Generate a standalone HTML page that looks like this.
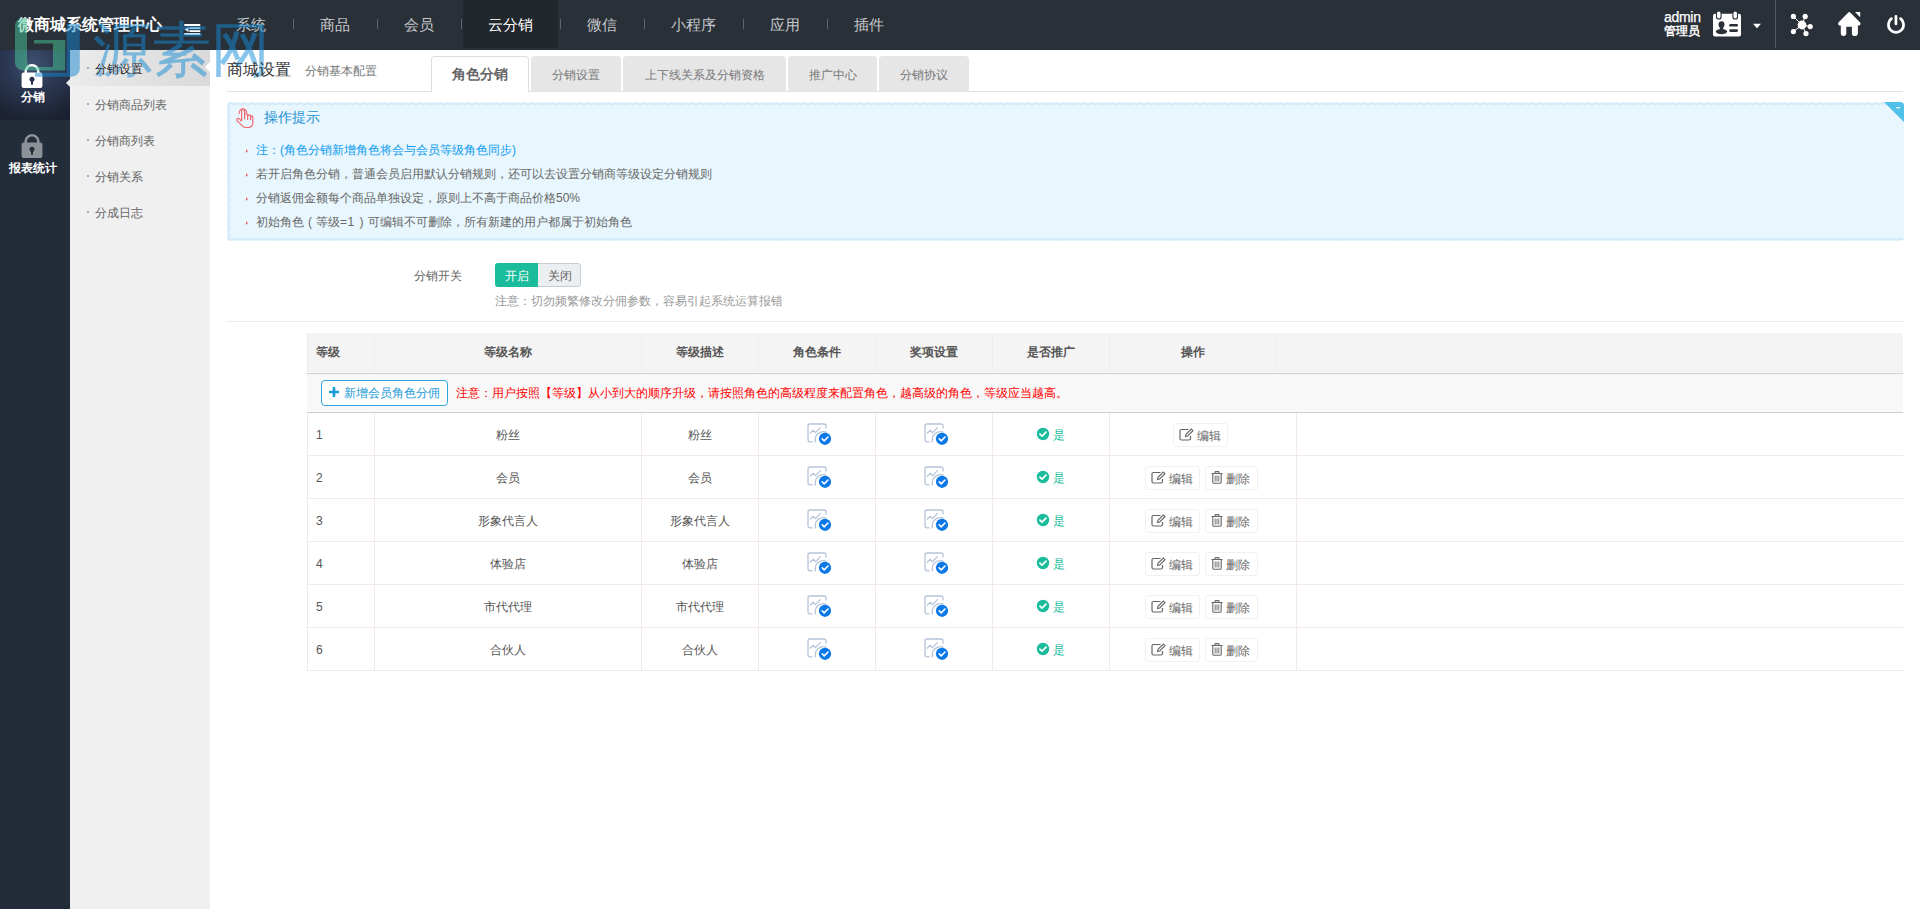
<!DOCTYPE html><html><head><meta charset="utf-8"><style>
*{margin:0;padding:0;box-sizing:border-box}
html,body{width:1920px;height:909px;overflow:hidden;background:#fff;font-family:"Liberation Sans",sans-serif;font-size:12px;color:#666}
.a{position:absolute;white-space:nowrap}
#top{position:absolute;left:0;top:0;width:1920px;height:50px;background:#2a3038}
#logo{position:absolute;left:18px;top:15px;font-size:16px;font-weight:bold;color:#fff;line-height:20px;white-space:nowrap}
.nav{position:absolute;top:0;height:50px;line-height:50px;font-size:15px;color:#c6c9cd;text-align:center;white-space:nowrap}
.nav.on{background:#22262d;color:#fff;height:48px}
.sep{position:absolute;top:19px;width:1px;height:10px;background:#5e646c}
#side{position:absolute;left:0;top:50px;width:70px;height:859px;background:#232d39}
#side .on{position:absolute;left:0;top:0;width:70px;height:70px;background:radial-gradient(ellipse 62px 58px at 33px 14px,#3d5170 0%,#2b3752 45%,#1b2130 100%)}
.sl{position:absolute;left:0;width:66px;text-align:center;font-weight:bold;color:#fff;font-size:12px;line-height:14px}
#sub{position:absolute;left:70px;top:50px;width:140px;height:859px;background:#f0f0f0}
.si{position:absolute;left:0;width:140px;height:36px;line-height:38px;padding-left:25px;color:#666;white-space:nowrap}
.si:before{content:"";position:absolute;left:17px;top:17px;width:2px;height:2px;background:#aaa}
.si.on{background:linear-gradient(90deg,#ebebeb,#d9d9d9);color:#111}
.si.on span{position:relative;z-index:20;text-shadow:0 0 1px #fff,0 0 1px #fff}
.tab{position:absolute;top:56px;height:35px;line-height:38px;text-align:center;background:#e6e6e6;border-radius:4px 4px 0 0;color:#777;font-size:12px}
.tab.on{background:#fff;border:1px solid #ddd;border-bottom:none;height:36px;font-size:14px;font-weight:bold;color:#666;line-height:34px}
.tip{position:absolute;left:227px;top:102px;width:1677px;height:139px;background:#e9f6fc;border:1px dashed #cbe7f5;border-radius:4px}
.tl{position:absolute;left:256px;line-height:16px;color:#777}
.tb{position:absolute;left:246px;width:0;height:0;border-left:2.5px solid #f2646d;border-top:2px solid transparent;border-bottom:2px solid transparent}
.th{position:absolute;top:333px;height:40px;line-height:40px;text-align:center;font-weight:bold;color:#555;background:#f4f4f4;border-right:1px solid #f2e9ea}
.td{position:absolute;height:43px;line-height:43px;text-align:center;color:#555;border-right:1px solid #f2e9ea;border-bottom:1px solid #f2e9ea}
.btn{position:absolute;height:24px;line-height:25px;border:1px solid #f1f1f1;border-radius:3px;color:#666;background:#fff}
</style></head><body>
<div id="top"><div id="logo">微商城系统管理中心</div><div class="nav" style="left:209px;width:84px">系统</div>
<div class="nav" style="left:293px;width:84px">商品</div>
<div class="sep" style="left:293px"></div>
<div class="nav" style="left:377px;width:84px">会员</div>
<div class="sep" style="left:377px"></div>
<div class="nav on" style="left:463px;width:95px">云分销</div>
<div class="sep" style="left:461px"></div>
<div class="nav" style="left:560px;width:84px">微信</div>
<div class="sep" style="left:560px"></div>
<div class="nav" style="left:644px;width:99px">小程序</div>
<div class="sep" style="left:644px"></div>
<div class="nav" style="left:743px;width:84px">应用</div>
<div class="sep" style="left:743px"></div>
<div class="nav" style="left:827px;width:84px">插件</div>
<div class="sep" style="left:827px"></div></div>
<svg class="a" style="left:184px;top:23px" width="17" height="13" viewBox="0 0 17 13">
<rect x="0.3" y="1" width="16" height="2" fill="#fff"/><rect x="5.4" y="4.2" width="10.9" height="1.8" fill="#fff"/>
<rect x="5.4" y="7.2" width="10.9" height="1.8" fill="#fff"/><rect x="0.3" y="10" width="16" height="2" fill="#fff"/>
<path d="M0.5 6.5 L4.5 4 L4.5 9 Z" fill="#fff"/></svg>
<div class="a" style="left:1664px;top:8.5px;color:#fff;font-size:14px;line-height:16px;letter-spacing:-0.3px;-webkit-text-stroke:0.25px #fff">admin</div>
<div class="a" style="left:1664px;top:23px;color:#fff;font-size:12px;font-weight:bold;line-height:16px">管理员</div>
<svg class="a" style="left:1712px;top:11px" width="30" height="27" viewBox="0 0 30 27">
<rect x="1" y="2.8" width="28" height="22.6" rx="2" fill="#fff"/>
<rect x="4.5" y="0" width="4.6" height="8" rx="2.3" fill="#fff" stroke="#2a3038" stroke-width="1.1"/>
<rect x="20.9" y="0" width="4.6" height="8" rx="2.3" fill="#fff" stroke="#2a3038" stroke-width="1.1"/>
<ellipse cx="9.5" cy="13.6" rx="3" ry="3.4" fill="#2a3038"/>
<rect x="7.8" y="15" width="3.4" height="4.5" fill="#2a3038"/>
<ellipse cx="9.5" cy="20.6" rx="5.6" ry="2.7" fill="#2a3038"/>
<rect x="17.2" y="13.1" width="8.8" height="2.5" rx="1.25" fill="#2a3038"/><rect x="17.2" y="18.3" width="8.8" height="2.6" rx="1.3" fill="#2a3038"/>
</svg>
<svg class="a" style="left:1752px;top:23px" width="10" height="6" viewBox="0 0 10 6"><path d="M1 0.8 H9 L5 5.2 Z" fill="#fff"/></svg>
<div class="a" style="left:1775px;top:0;width:1px;height:48px;background:#545961"></div>
<svg class="a" style="left:1788px;top:12px" width="28" height="26" viewBox="1788 12 28 26">
<g stroke="#fff" stroke-width="1" fill="none"><path d="M1793.4 16.4 L1802 25 L1805.2 16.4 M1802 25 L1810.2 26.6 M1802 25 L1793.4 31.6 M1802 25 L1806 33.6"/></g>
<g fill="#fff"><circle cx="1802" cy="25" r="4.4"/><circle cx="1793.4" cy="16.4" r="2.6"/><circle cx="1805.2" cy="16.4" r="2.6"/>
<circle cx="1810.2" cy="26.6" r="2.6"/><circle cx="1793.4" cy="31.6" r="2.6"/><circle cx="1806" cy="33.6" r="2.6"/></g></svg>
<svg class="a" style="left:1836px;top:10px" width="28" height="28" viewBox="1836 10 28 28">
<path d="M1848.1 12.7 Q1849.3 11.5 1850.5 12.7 L1859.9 22.2 Q1861.6 24.1 1859.3 25.6 L1857.9 25.6 L1857.9 33.8 Q1857.7 36.1 1854.9 36.1 Q1852.1 36.1 1851.9 33.8 L1851.9 26.8 L1846.3 26.8 L1846.3 33.8 Q1846.1 36.1 1843.5 36.1 Q1841 36.1 1840.8 33.8 L1840.8 25.6 L1839.4 25.6 Q1837 24.1 1838.7 22.2 Z" fill="#fff"/>
<path d="M1855 12 L1860.2 12 L1860.2 17.2 Z" fill="#fff"/></svg>
<svg class="a" style="left:1885px;top:13px" width="22" height="23" viewBox="1885 13 22 23">
<path d="M1891.4 18.7 A7.6 7.6 0 1 0 1900.6 18.7" fill="none" stroke="#fff" stroke-width="2.8" stroke-linecap="round"/>
<rect x="1894.6" y="15" width="2.7" height="10.2" rx="1.3" fill="#fff"/></svg>
<div id="side"><div class="on"></div></div>
<svg class="a" style="left:21px;top:63px" width="22" height="26" viewBox="0 0 22 26">
<path d="M4.7 10.5 V8.65 A6.3 6.3 0 0 1 17.3 8.65 V10.5" fill="none" stroke="#fff" stroke-width="2.5"/>
<rect x="0.6" y="9.6" width="20.8" height="15.4" rx="2" fill="#fff"/>
<circle cx="11" cy="16.3" r="2.5" fill="#25304a"/><path d="M9.9 17 L12.1 17 L11.9 21.6 Q11 22.2 10.1 21.6 Z" fill="#25304a"/></svg>
<div class="sl" style="top:90px">分销</div>
<svg class="a" style="left:21px;top:133px" width="22" height="26" viewBox="0 0 22 26">
<path d="M4.7 10.5 V8.65 A6.3 6.3 0 0 1 17.3 8.65 V10.5" fill="none" stroke="#8d9299" stroke-width="2.5"/>
<rect x="0.6" y="9.6" width="20.8" height="15.4" rx="2" fill="#8d9299"/>
<circle cx="11" cy="16.3" r="2.5" fill="#232d39"/><path d="M9.9 17 L12.1 17 L11.9 21.6 Q11 22.2 10.1 21.6 Z" fill="#232d39"/></svg>
<div class="sl" style="top:161px">报表统计</div>
<div class="a" style="left:66px;top:79px;width:0;height:0;border-right:4px solid #e9e9e9;border-top:4.5px solid transparent;border-bottom:4.5px solid transparent"></div>
<div id="sub"><div class="si on" style="top:0"><span>分销设置</span></div><div class="si" style="top:36px">分销商品列表</div><div class="si" style="top:72px">分销商列表</div><div class="si" style="top:108px">分销关系</div><div class="si" style="top:144px">分成日志</div></div>
<div class="a" style="left:205px;top:62px;width:0;height:0;border-right:5px solid #fff;border-top:5px solid transparent;border-bottom:5px solid transparent"></div>
<div class="a" style="left:227px;top:60px;font-size:16px;line-height:20px;color:#333;z-index:20">商城设置</div>
<div class="a" style="left:305px;top:63px;font-size:12px;line-height:16px;color:#777">分销基本配置</div>
<div class="a" style="left:227px;top:91px;width:1676px;height:1px;background:#e2e2e2"></div>
<div class="tab on" style="left:431px;width:98px">角色分销</div>
<div class="tab" style="left:531px;width:90px">分销设置</div>
<div class="tab" style="left:623px;width:163px">上下线关系及分销资格</div>
<div class="tab" style="left:788px;width:89px">推广中心</div>
<div class="tab" style="left:879px;width:90px">分销协议</div>
<svg class="a" style="left:227px;top:102px" width="1677" height="139" viewBox="0 0 1677 139">
<defs>
<pattern id="pt" x="0" y="0" width="7" height="4" patternUnits="userSpaceOnUse"><path d="M-0.5 3.2 Q3.5 -0.4 7.5 3.2" fill="none" stroke="#d2eaf7" stroke-width="1.6"/></pattern>
<pattern id="pb" x="0" y="135" width="7" height="4" patternUnits="userSpaceOnUse"><path d="M-0.5 0.8 Q3.5 4.4 7.5 0.8" fill="none" stroke="#d2eaf7" stroke-width="1.6"/></pattern>
<pattern id="pl" x="0" y="0" width="4" height="7" patternUnits="userSpaceOnUse"><path d="M3.2 -0.5 Q-0.4 3.5 3.2 7.5" fill="none" stroke="#d2eaf7" stroke-width="1.6"/></pattern>
<pattern id="pr" x="1673" y="0" width="4" height="7" patternUnits="userSpaceOnUse"><path d="M0.8 -0.5 Q4.4 3.5 0.8 7.5" fill="none" stroke="#d2eaf7" stroke-width="1.6"/></pattern>
<clipPath id="cr"><rect x="0" y="0" width="1677" height="139" rx="4"/></clipPath>
</defs>
<g clip-path="url(#cr)">
<rect x="0" y="0" width="1677" height="139" fill="#e8f6fd"/>
<rect x="0" y="0" width="1677" height="4" fill="url(#pt)"/>
<rect x="0" y="135" width="1677" height="4" fill="url(#pb)"/>
<rect x="0" y="0" width="4" height="139" fill="url(#pl)"/>
</g></svg>
<svg class="a" style="left:1884px;top:102px" width="20" height="20" viewBox="0 0 20 20"><path d="M0 0 H16 A4 4 0 0 1 20 4 V20 Z" fill="#4fc0e8"/><rect x="12" y="5" width="4" height="1.3" fill="#fff"/></svg>
<svg class="a" style="left:230px;top:104px" width="30" height="28" viewBox="230 104 30 28">
<g fill="none" stroke="#f4666e" stroke-width="1.15" stroke-linecap="round" stroke-linejoin="round">
<path d="M241.6 120.5 V111.2 A1.5 1.5 0 0 1 244.6 111.2 V118.8"/>
<path d="M244.6 115 A1.5 1.3 0 0 1 247.6 115 V119.5"/>
<path d="M247.6 116.2 A1.5 1.3 0 0 1 250.6 116.2 V119.5"/>
<path d="M250.6 117 A1.1 1.1 0 0 1 252.8 117 V123.3 A4.2 4.2 0 0 1 248.6 127.5 H245.6 A3.5 3.5 0 0 1 243 126.4 L237.2 120.8 A1.3 1.3 0 0 1 239 118.8 L241.6 121"/>
<path d="M239.2 113.6 A3.8 4.3 0 1 1 246.8 112.8"/>
</g></svg>
<div class="a" style="left:264px;top:108px;font-size:14px;line-height:18px;color:#1890d2">操作提示</div>
<div class="tb" style="top:148.5px"></div>
<div class="tl" style="top:142px;color:#0e9cf0">注：(角色分销新增角色将会与会员等级角色同步)</div>
<div class="tb" style="top:172.5px"></div>
<div class="tl" style="top:166px;color:#666">若开启角色分销，普通会员启用默认分销规则，还可以去设置分销商等级设定分销规则</div>
<div class="tb" style="top:196.5px"></div>
<div class="tl" style="top:190px;color:#666">分销返佣金额每个商品单独设定，原则上不高于商品价格50%</div>
<div class="tb" style="top:220.5px"></div>
<div class="tl" style="top:214px;color:#666">初始角色<span style="display:inline-block;width:12px;text-align:center">(</span>等级<span style="letter-spacing:0.6px">=1</span><span style="display:inline-block;width:13px;text-align:center">)</span>可编辑不可删除，所有新建的用户都属于初始角色</div>
<div class="a" style="left:414px;top:268px;line-height:16px;color:#666">分销开关</div>
<div class="a" style="left:495px;top:263px;width:86px;height:24px;border:1px solid #c8cdd2;border-radius:3px;background:#eceff1"></div>
<div class="a" style="left:495px;top:263px;width:43px;height:24px;border-radius:3px 0 0 3px;background:#1abc9c;color:#fff;text-align:center;line-height:26px">开启</div>
<div class="a" style="left:538px;top:263px;width:43px;height:24px;text-align:center;line-height:26px;color:#666">关闭</div>
<div class="a" style="left:495px;top:293px;line-height:16px;color:#999">注意：切勿频繁修改分佣参数，容易引起系统运算报错</div>
<div class="a" style="left:227px;top:321px;width:1676px;height:1px;background:#eaeaea"></div>
<div class="a" style="left:307px;top:333px;width:1596px;height:38px;background:#f4f4f4"></div>
<div class="a" style="left:307px;top:333px;width:1px;height:38px;background:#f2eaea"></div>
<div class="a" style="left:374px;top:333px;width:1px;height:38px;background:#f2eaea"></div>
<div class="a" style="left:641px;top:333px;width:1px;height:38px;background:#f2eaea"></div>
<div class="a" style="left:758px;top:333px;width:1px;height:38px;background:#f2eaea"></div>
<div class="a" style="left:875px;top:333px;width:1px;height:38px;background:#f2eaea"></div>
<div class="a" style="left:992px;top:333px;width:1px;height:38px;background:#f2eaea"></div>
<div class="a" style="left:1109px;top:333px;width:1px;height:38px;background:#f2eaea"></div>
<div class="a" style="left:1276px;top:333px;width:1px;height:38px;background:#f2eaea"></div>
<div class="a" style="left:307px;top:371px;width:1596px;height:1px;background:#f2eaea"></div>
<div class="a" style="left:316px;top:344px;line-height:16px;font-weight:bold;color:#555">等级</div>
<div class="a" style="left:374px;width:267px;text-align:center;top:344px;line-height:16px;font-weight:bold;color:#555">等级名称</div>
<div class="a" style="left:641px;width:117px;text-align:center;top:344px;line-height:16px;font-weight:bold;color:#555">等级描述</div>
<div class="a" style="left:758px;width:117px;text-align:center;top:344px;line-height:16px;font-weight:bold;color:#555">角色条件</div>
<div class="a" style="left:875px;width:117px;text-align:center;top:344px;line-height:16px;font-weight:bold;color:#555">奖项设置</div>
<div class="a" style="left:992px;width:117px;text-align:center;top:344px;line-height:16px;font-weight:bold;color:#555">是否推广</div>
<div class="a" style="left:1109px;width:167px;text-align:center;top:344px;line-height:16px;font-weight:bold;color:#555">操作</div>
<div class="a" style="left:307px;top:373px;width:1596px;height:1px;background:#cdcdcd"></div>
<div class="a" style="left:307px;top:374px;width:1596px;height:38px;background:#f8f8f8"></div>
<div class="a" style="left:307px;top:412px;width:1596px;height:1px;background:#cdcdcd"></div>
<div class="a" style="left:321px;top:380px;width:127px;height:26px;border:1px solid #2ea3dd;border-radius:4px;background:#fff;color:#1a9ad6;line-height:24px;padding-left:22px">新增会员角色分佣</div>
<svg class="a" style="left:328px;top:386px" width="12" height="12" viewBox="0 0 12 12"><path d="M6 1 V11 M1 6 H11" stroke="#1a9ad6" stroke-width="2.6"/></svg>
<div class="a" style="left:456px;top:385px;line-height:16px;color:#f00;">注意：用户按照【等级】从小到大的顺序升级，请按照角色的高级程度来配置角色，越高级的角色，等级应当越高。</div>
<div class="a" style="left:307px;top:413px;width:1px;height:258px;background:#f2eaea"></div>
<div class="a" style="left:374px;top:413px;width:1px;height:258px;background:#f2eaea"></div>
<div class="a" style="left:641px;top:413px;width:1px;height:258px;background:#f2eaea"></div>
<div class="a" style="left:758px;top:413px;width:1px;height:258px;background:#f2eaea"></div>
<div class="a" style="left:875px;top:413px;width:1px;height:258px;background:#f2eaea"></div>
<div class="a" style="left:992px;top:413px;width:1px;height:258px;background:#f2eaea"></div>
<div class="a" style="left:1109px;top:413px;width:1px;height:258px;background:#f2eaea"></div>
<div class="a" style="left:1296px;top:413px;width:1px;height:258px;background:#f2eaea"></div>
<div class="a" style="left:307px;top:455px;width:1596px;height:1px;background:#f2eaea"></div>
<div class="a" style="left:316px;top:427px;line-height:16px;color:#555">1</div>
<div class="a" style="left:375px;width:266px;text-align:center;top:427px;line-height:16px;color:#555">粉丝</div>
<div class="a" style="left:642px;width:116px;text-align:center;top:427px;line-height:16px;color:#555">粉丝</div>
<svg class="a" style="left:806px;top:423px" width="26" height="24" viewBox="0 0 26 24">
<g fill="none" stroke="#b5c4d9" stroke-width="1.3" stroke-linecap="round">
<path d="M6.2 18.8 H4 A2 2 0 0 1 2 16.8 V3 A2 2 0 0 1 4 1 H18 A2 2 0 0 1 20 3 V5"/>
<path d="M4.3 10.1 L7.3 7.3 L9.5 9.6 L14.4 4.6"/><path d="M9.3 18.8 V16 A8.5 7.5 0 0 1 17 8.6 A3 2 0 0 1 20 9.3"/></g>
<circle cx="19" cy="15.8" r="6.1" fill="#0b78e8"/>
<path d="M16.1 15.8 L18.2 17.9 L22 14" fill="none" stroke="#fff" stroke-width="1.6" stroke-linecap="round" stroke-linejoin="round"/></svg>
<svg class="a" style="left:923px;top:423px" width="26" height="24" viewBox="0 0 26 24">
<g fill="none" stroke="#b5c4d9" stroke-width="1.3" stroke-linecap="round">
<path d="M6.2 18.8 H4 A2 2 0 0 1 2 16.8 V3 A2 2 0 0 1 4 1 H18 A2 2 0 0 1 20 3 V5"/>
<path d="M4.3 10.1 L7.3 7.3 L9.5 9.6 L14.4 4.6"/><path d="M9.3 18.8 V16 A8.5 7.5 0 0 1 17 8.6 A3 2 0 0 1 20 9.3"/></g>
<circle cx="19" cy="15.8" r="6.1" fill="#0b78e8"/>
<path d="M16.1 15.8 L18.2 17.9 L22 14" fill="none" stroke="#fff" stroke-width="1.6" stroke-linecap="round" stroke-linejoin="round"/></svg>
<svg class="a" style="left:1036px;top:427px" width="14" height="14" viewBox="0 0 14 14">
<circle cx="7" cy="7" r="6.2" fill="#1abc9c"/><path d="M3.9 7.1 L6 9.1 L10 5.1" fill="none" stroke="#fff" stroke-width="1.7" stroke-linecap="round" stroke-linejoin="round"/></svg><div class="a" style="left:1053px;top:427px;line-height:16px;color:#1abc9c;font-size:12px">是</div>
<div class="btn" style="left:1173px;top:423px;width:55px;padding-left:23px">编辑</div>
<svg class="a" style="left:1179px;top:428px" width="15" height="13" viewBox="0 0 15 13">
<path d="M9.5 1.5 H2.5 A1.5 1.5 0 0 0 1 3 V10.5 A1.5 1.5 0 0 0 2.5 12 H10 A1.5 1.5 0 0 0 11.5 10.5 V8" fill="none" stroke="#666" stroke-width="1.2"/>
<path d="M6.5 8.5 L7 6.3 L12.3 1 L14 2.7 L8.7 8 Z" fill="none" stroke="#666" stroke-width="1.1"/></svg>
<div class="a" style="left:307px;top:498px;width:1596px;height:1px;background:#f2eaea"></div>
<div class="a" style="left:316px;top:470px;line-height:16px;color:#555">2</div>
<div class="a" style="left:375px;width:266px;text-align:center;top:470px;line-height:16px;color:#555">会员</div>
<div class="a" style="left:642px;width:116px;text-align:center;top:470px;line-height:16px;color:#555">会员</div>
<svg class="a" style="left:806px;top:466px" width="26" height="24" viewBox="0 0 26 24">
<g fill="none" stroke="#b5c4d9" stroke-width="1.3" stroke-linecap="round">
<path d="M6.2 18.8 H4 A2 2 0 0 1 2 16.8 V3 A2 2 0 0 1 4 1 H18 A2 2 0 0 1 20 3 V5"/>
<path d="M4.3 10.1 L7.3 7.3 L9.5 9.6 L14.4 4.6"/><path d="M9.3 18.8 V16 A8.5 7.5 0 0 1 17 8.6 A3 2 0 0 1 20 9.3"/></g>
<circle cx="19" cy="15.8" r="6.1" fill="#0b78e8"/>
<path d="M16.1 15.8 L18.2 17.9 L22 14" fill="none" stroke="#fff" stroke-width="1.6" stroke-linecap="round" stroke-linejoin="round"/></svg>
<svg class="a" style="left:923px;top:466px" width="26" height="24" viewBox="0 0 26 24">
<g fill="none" stroke="#b5c4d9" stroke-width="1.3" stroke-linecap="round">
<path d="M6.2 18.8 H4 A2 2 0 0 1 2 16.8 V3 A2 2 0 0 1 4 1 H18 A2 2 0 0 1 20 3 V5"/>
<path d="M4.3 10.1 L7.3 7.3 L9.5 9.6 L14.4 4.6"/><path d="M9.3 18.8 V16 A8.5 7.5 0 0 1 17 8.6 A3 2 0 0 1 20 9.3"/></g>
<circle cx="19" cy="15.8" r="6.1" fill="#0b78e8"/>
<path d="M16.1 15.8 L18.2 17.9 L22 14" fill="none" stroke="#fff" stroke-width="1.6" stroke-linecap="round" stroke-linejoin="round"/></svg>
<svg class="a" style="left:1036px;top:470px" width="14" height="14" viewBox="0 0 14 14">
<circle cx="7" cy="7" r="6.2" fill="#1abc9c"/><path d="M3.9 7.1 L6 9.1 L10 5.1" fill="none" stroke="#fff" stroke-width="1.7" stroke-linecap="round" stroke-linejoin="round"/></svg><div class="a" style="left:1053px;top:470px;line-height:16px;color:#1abc9c;font-size:12px">是</div>
<div class="btn" style="left:1145px;top:466px;width:55px;padding-left:23px">编辑</div>
<svg class="a" style="left:1151px;top:471px" width="15" height="13" viewBox="0 0 15 13">
<path d="M9.5 1.5 H2.5 A1.5 1.5 0 0 0 1 3 V10.5 A1.5 1.5 0 0 0 2.5 12 H10 A1.5 1.5 0 0 0 11.5 10.5 V8" fill="none" stroke="#666" stroke-width="1.2"/>
<path d="M6.5 8.5 L7 6.3 L12.3 1 L14 2.7 L8.7 8 Z" fill="none" stroke="#666" stroke-width="1.1"/></svg>
<div class="btn" style="left:1205px;top:466px;width:53px;padding-left:20px">删除</div>
<svg class="a" style="left:1211px;top:471px" width="12" height="13" viewBox="0 0 12 13">
<path d="M0.5 2.5 H11.5 M4 2.5 V1.4 Q4 0.6 4.8 0.6 H7.2 Q8 0.6 8 1.4 V2.5" fill="none" stroke="#666" stroke-width="1.1"/>
<path d="M1.8 2.8 V11 Q1.8 12.3 3 12.3 H9 Q10.2 12.3 10.2 11 V2.8" fill="none" stroke="#666" stroke-width="1.1"/>
<path d="M4.2 4.5 V10.5 M6 4.5 V10.5 M7.8 4.5 V10.5" stroke="#666" stroke-width="0.9"/></svg>
<div class="a" style="left:307px;top:541px;width:1596px;height:1px;background:#f2eaea"></div>
<div class="a" style="left:316px;top:513px;line-height:16px;color:#555">3</div>
<div class="a" style="left:375px;width:266px;text-align:center;top:513px;line-height:16px;color:#555">形象代言人</div>
<div class="a" style="left:642px;width:116px;text-align:center;top:513px;line-height:16px;color:#555">形象代言人</div>
<svg class="a" style="left:806px;top:509px" width="26" height="24" viewBox="0 0 26 24">
<g fill="none" stroke="#b5c4d9" stroke-width="1.3" stroke-linecap="round">
<path d="M6.2 18.8 H4 A2 2 0 0 1 2 16.8 V3 A2 2 0 0 1 4 1 H18 A2 2 0 0 1 20 3 V5"/>
<path d="M4.3 10.1 L7.3 7.3 L9.5 9.6 L14.4 4.6"/><path d="M9.3 18.8 V16 A8.5 7.5 0 0 1 17 8.6 A3 2 0 0 1 20 9.3"/></g>
<circle cx="19" cy="15.8" r="6.1" fill="#0b78e8"/>
<path d="M16.1 15.8 L18.2 17.9 L22 14" fill="none" stroke="#fff" stroke-width="1.6" stroke-linecap="round" stroke-linejoin="round"/></svg>
<svg class="a" style="left:923px;top:509px" width="26" height="24" viewBox="0 0 26 24">
<g fill="none" stroke="#b5c4d9" stroke-width="1.3" stroke-linecap="round">
<path d="M6.2 18.8 H4 A2 2 0 0 1 2 16.8 V3 A2 2 0 0 1 4 1 H18 A2 2 0 0 1 20 3 V5"/>
<path d="M4.3 10.1 L7.3 7.3 L9.5 9.6 L14.4 4.6"/><path d="M9.3 18.8 V16 A8.5 7.5 0 0 1 17 8.6 A3 2 0 0 1 20 9.3"/></g>
<circle cx="19" cy="15.8" r="6.1" fill="#0b78e8"/>
<path d="M16.1 15.8 L18.2 17.9 L22 14" fill="none" stroke="#fff" stroke-width="1.6" stroke-linecap="round" stroke-linejoin="round"/></svg>
<svg class="a" style="left:1036px;top:513px" width="14" height="14" viewBox="0 0 14 14">
<circle cx="7" cy="7" r="6.2" fill="#1abc9c"/><path d="M3.9 7.1 L6 9.1 L10 5.1" fill="none" stroke="#fff" stroke-width="1.7" stroke-linecap="round" stroke-linejoin="round"/></svg><div class="a" style="left:1053px;top:513px;line-height:16px;color:#1abc9c;font-size:12px">是</div>
<div class="btn" style="left:1145px;top:509px;width:55px;padding-left:23px">编辑</div>
<svg class="a" style="left:1151px;top:514px" width="15" height="13" viewBox="0 0 15 13">
<path d="M9.5 1.5 H2.5 A1.5 1.5 0 0 0 1 3 V10.5 A1.5 1.5 0 0 0 2.5 12 H10 A1.5 1.5 0 0 0 11.5 10.5 V8" fill="none" stroke="#666" stroke-width="1.2"/>
<path d="M6.5 8.5 L7 6.3 L12.3 1 L14 2.7 L8.7 8 Z" fill="none" stroke="#666" stroke-width="1.1"/></svg>
<div class="btn" style="left:1205px;top:509px;width:53px;padding-left:20px">删除</div>
<svg class="a" style="left:1211px;top:514px" width="12" height="13" viewBox="0 0 12 13">
<path d="M0.5 2.5 H11.5 M4 2.5 V1.4 Q4 0.6 4.8 0.6 H7.2 Q8 0.6 8 1.4 V2.5" fill="none" stroke="#666" stroke-width="1.1"/>
<path d="M1.8 2.8 V11 Q1.8 12.3 3 12.3 H9 Q10.2 12.3 10.2 11 V2.8" fill="none" stroke="#666" stroke-width="1.1"/>
<path d="M4.2 4.5 V10.5 M6 4.5 V10.5 M7.8 4.5 V10.5" stroke="#666" stroke-width="0.9"/></svg>
<div class="a" style="left:307px;top:584px;width:1596px;height:1px;background:#f2eaea"></div>
<div class="a" style="left:316px;top:556px;line-height:16px;color:#555">4</div>
<div class="a" style="left:375px;width:266px;text-align:center;top:556px;line-height:16px;color:#555">体验店</div>
<div class="a" style="left:642px;width:116px;text-align:center;top:556px;line-height:16px;color:#555">体验店</div>
<svg class="a" style="left:806px;top:552px" width="26" height="24" viewBox="0 0 26 24">
<g fill="none" stroke="#b5c4d9" stroke-width="1.3" stroke-linecap="round">
<path d="M6.2 18.8 H4 A2 2 0 0 1 2 16.8 V3 A2 2 0 0 1 4 1 H18 A2 2 0 0 1 20 3 V5"/>
<path d="M4.3 10.1 L7.3 7.3 L9.5 9.6 L14.4 4.6"/><path d="M9.3 18.8 V16 A8.5 7.5 0 0 1 17 8.6 A3 2 0 0 1 20 9.3"/></g>
<circle cx="19" cy="15.8" r="6.1" fill="#0b78e8"/>
<path d="M16.1 15.8 L18.2 17.9 L22 14" fill="none" stroke="#fff" stroke-width="1.6" stroke-linecap="round" stroke-linejoin="round"/></svg>
<svg class="a" style="left:923px;top:552px" width="26" height="24" viewBox="0 0 26 24">
<g fill="none" stroke="#b5c4d9" stroke-width="1.3" stroke-linecap="round">
<path d="M6.2 18.8 H4 A2 2 0 0 1 2 16.8 V3 A2 2 0 0 1 4 1 H18 A2 2 0 0 1 20 3 V5"/>
<path d="M4.3 10.1 L7.3 7.3 L9.5 9.6 L14.4 4.6"/><path d="M9.3 18.8 V16 A8.5 7.5 0 0 1 17 8.6 A3 2 0 0 1 20 9.3"/></g>
<circle cx="19" cy="15.8" r="6.1" fill="#0b78e8"/>
<path d="M16.1 15.8 L18.2 17.9 L22 14" fill="none" stroke="#fff" stroke-width="1.6" stroke-linecap="round" stroke-linejoin="round"/></svg>
<svg class="a" style="left:1036px;top:556px" width="14" height="14" viewBox="0 0 14 14">
<circle cx="7" cy="7" r="6.2" fill="#1abc9c"/><path d="M3.9 7.1 L6 9.1 L10 5.1" fill="none" stroke="#fff" stroke-width="1.7" stroke-linecap="round" stroke-linejoin="round"/></svg><div class="a" style="left:1053px;top:556px;line-height:16px;color:#1abc9c;font-size:12px">是</div>
<div class="btn" style="left:1145px;top:552px;width:55px;padding-left:23px">编辑</div>
<svg class="a" style="left:1151px;top:557px" width="15" height="13" viewBox="0 0 15 13">
<path d="M9.5 1.5 H2.5 A1.5 1.5 0 0 0 1 3 V10.5 A1.5 1.5 0 0 0 2.5 12 H10 A1.5 1.5 0 0 0 11.5 10.5 V8" fill="none" stroke="#666" stroke-width="1.2"/>
<path d="M6.5 8.5 L7 6.3 L12.3 1 L14 2.7 L8.7 8 Z" fill="none" stroke="#666" stroke-width="1.1"/></svg>
<div class="btn" style="left:1205px;top:552px;width:53px;padding-left:20px">删除</div>
<svg class="a" style="left:1211px;top:557px" width="12" height="13" viewBox="0 0 12 13">
<path d="M0.5 2.5 H11.5 M4 2.5 V1.4 Q4 0.6 4.8 0.6 H7.2 Q8 0.6 8 1.4 V2.5" fill="none" stroke="#666" stroke-width="1.1"/>
<path d="M1.8 2.8 V11 Q1.8 12.3 3 12.3 H9 Q10.2 12.3 10.2 11 V2.8" fill="none" stroke="#666" stroke-width="1.1"/>
<path d="M4.2 4.5 V10.5 M6 4.5 V10.5 M7.8 4.5 V10.5" stroke="#666" stroke-width="0.9"/></svg>
<div class="a" style="left:307px;top:627px;width:1596px;height:1px;background:#f2eaea"></div>
<div class="a" style="left:316px;top:599px;line-height:16px;color:#555">5</div>
<div class="a" style="left:375px;width:266px;text-align:center;top:599px;line-height:16px;color:#555">市代代理</div>
<div class="a" style="left:642px;width:116px;text-align:center;top:599px;line-height:16px;color:#555">市代代理</div>
<svg class="a" style="left:806px;top:595px" width="26" height="24" viewBox="0 0 26 24">
<g fill="none" stroke="#b5c4d9" stroke-width="1.3" stroke-linecap="round">
<path d="M6.2 18.8 H4 A2 2 0 0 1 2 16.8 V3 A2 2 0 0 1 4 1 H18 A2 2 0 0 1 20 3 V5"/>
<path d="M4.3 10.1 L7.3 7.3 L9.5 9.6 L14.4 4.6"/><path d="M9.3 18.8 V16 A8.5 7.5 0 0 1 17 8.6 A3 2 0 0 1 20 9.3"/></g>
<circle cx="19" cy="15.8" r="6.1" fill="#0b78e8"/>
<path d="M16.1 15.8 L18.2 17.9 L22 14" fill="none" stroke="#fff" stroke-width="1.6" stroke-linecap="round" stroke-linejoin="round"/></svg>
<svg class="a" style="left:923px;top:595px" width="26" height="24" viewBox="0 0 26 24">
<g fill="none" stroke="#b5c4d9" stroke-width="1.3" stroke-linecap="round">
<path d="M6.2 18.8 H4 A2 2 0 0 1 2 16.8 V3 A2 2 0 0 1 4 1 H18 A2 2 0 0 1 20 3 V5"/>
<path d="M4.3 10.1 L7.3 7.3 L9.5 9.6 L14.4 4.6"/><path d="M9.3 18.8 V16 A8.5 7.5 0 0 1 17 8.6 A3 2 0 0 1 20 9.3"/></g>
<circle cx="19" cy="15.8" r="6.1" fill="#0b78e8"/>
<path d="M16.1 15.8 L18.2 17.9 L22 14" fill="none" stroke="#fff" stroke-width="1.6" stroke-linecap="round" stroke-linejoin="round"/></svg>
<svg class="a" style="left:1036px;top:599px" width="14" height="14" viewBox="0 0 14 14">
<circle cx="7" cy="7" r="6.2" fill="#1abc9c"/><path d="M3.9 7.1 L6 9.1 L10 5.1" fill="none" stroke="#fff" stroke-width="1.7" stroke-linecap="round" stroke-linejoin="round"/></svg><div class="a" style="left:1053px;top:599px;line-height:16px;color:#1abc9c;font-size:12px">是</div>
<div class="btn" style="left:1145px;top:595px;width:55px;padding-left:23px">编辑</div>
<svg class="a" style="left:1151px;top:600px" width="15" height="13" viewBox="0 0 15 13">
<path d="M9.5 1.5 H2.5 A1.5 1.5 0 0 0 1 3 V10.5 A1.5 1.5 0 0 0 2.5 12 H10 A1.5 1.5 0 0 0 11.5 10.5 V8" fill="none" stroke="#666" stroke-width="1.2"/>
<path d="M6.5 8.5 L7 6.3 L12.3 1 L14 2.7 L8.7 8 Z" fill="none" stroke="#666" stroke-width="1.1"/></svg>
<div class="btn" style="left:1205px;top:595px;width:53px;padding-left:20px">删除</div>
<svg class="a" style="left:1211px;top:600px" width="12" height="13" viewBox="0 0 12 13">
<path d="M0.5 2.5 H11.5 M4 2.5 V1.4 Q4 0.6 4.8 0.6 H7.2 Q8 0.6 8 1.4 V2.5" fill="none" stroke="#666" stroke-width="1.1"/>
<path d="M1.8 2.8 V11 Q1.8 12.3 3 12.3 H9 Q10.2 12.3 10.2 11 V2.8" fill="none" stroke="#666" stroke-width="1.1"/>
<path d="M4.2 4.5 V10.5 M6 4.5 V10.5 M7.8 4.5 V10.5" stroke="#666" stroke-width="0.9"/></svg>
<div class="a" style="left:307px;top:670px;width:1596px;height:1px;background:#f2eaea"></div>
<div class="a" style="left:316px;top:642px;line-height:16px;color:#555">6</div>
<div class="a" style="left:375px;width:266px;text-align:center;top:642px;line-height:16px;color:#555">合伙人</div>
<div class="a" style="left:642px;width:116px;text-align:center;top:642px;line-height:16px;color:#555">合伙人</div>
<svg class="a" style="left:806px;top:638px" width="26" height="24" viewBox="0 0 26 24">
<g fill="none" stroke="#b5c4d9" stroke-width="1.3" stroke-linecap="round">
<path d="M6.2 18.8 H4 A2 2 0 0 1 2 16.8 V3 A2 2 0 0 1 4 1 H18 A2 2 0 0 1 20 3 V5"/>
<path d="M4.3 10.1 L7.3 7.3 L9.5 9.6 L14.4 4.6"/><path d="M9.3 18.8 V16 A8.5 7.5 0 0 1 17 8.6 A3 2 0 0 1 20 9.3"/></g>
<circle cx="19" cy="15.8" r="6.1" fill="#0b78e8"/>
<path d="M16.1 15.8 L18.2 17.9 L22 14" fill="none" stroke="#fff" stroke-width="1.6" stroke-linecap="round" stroke-linejoin="round"/></svg>
<svg class="a" style="left:923px;top:638px" width="26" height="24" viewBox="0 0 26 24">
<g fill="none" stroke="#b5c4d9" stroke-width="1.3" stroke-linecap="round">
<path d="M6.2 18.8 H4 A2 2 0 0 1 2 16.8 V3 A2 2 0 0 1 4 1 H18 A2 2 0 0 1 20 3 V5"/>
<path d="M4.3 10.1 L7.3 7.3 L9.5 9.6 L14.4 4.6"/><path d="M9.3 18.8 V16 A8.5 7.5 0 0 1 17 8.6 A3 2 0 0 1 20 9.3"/></g>
<circle cx="19" cy="15.8" r="6.1" fill="#0b78e8"/>
<path d="M16.1 15.8 L18.2 17.9 L22 14" fill="none" stroke="#fff" stroke-width="1.6" stroke-linecap="round" stroke-linejoin="round"/></svg>
<svg class="a" style="left:1036px;top:642px" width="14" height="14" viewBox="0 0 14 14">
<circle cx="7" cy="7" r="6.2" fill="#1abc9c"/><path d="M3.9 7.1 L6 9.1 L10 5.1" fill="none" stroke="#fff" stroke-width="1.7" stroke-linecap="round" stroke-linejoin="round"/></svg><div class="a" style="left:1053px;top:642px;line-height:16px;color:#1abc9c;font-size:12px">是</div>
<div class="btn" style="left:1145px;top:638px;width:55px;padding-left:23px">编辑</div>
<svg class="a" style="left:1151px;top:643px" width="15" height="13" viewBox="0 0 15 13">
<path d="M9.5 1.5 H2.5 A1.5 1.5 0 0 0 1 3 V10.5 A1.5 1.5 0 0 0 2.5 12 H10 A1.5 1.5 0 0 0 11.5 10.5 V8" fill="none" stroke="#666" stroke-width="1.2"/>
<path d="M6.5 8.5 L7 6.3 L12.3 1 L14 2.7 L8.7 8 Z" fill="none" stroke="#666" stroke-width="1.1"/></svg>
<div class="btn" style="left:1205px;top:638px;width:53px;padding-left:20px">删除</div>
<svg class="a" style="left:1211px;top:643px" width="12" height="13" viewBox="0 0 12 13">
<path d="M0.5 2.5 H11.5 M4 2.5 V1.4 Q4 0.6 4.8 0.6 H7.2 Q8 0.6 8 1.4 V2.5" fill="none" stroke="#666" stroke-width="1.1"/>
<path d="M1.8 2.8 V11 Q1.8 12.3 3 12.3 H9 Q10.2 12.3 10.2 11 V2.8" fill="none" stroke="#666" stroke-width="1.1"/>
<path d="M4.2 4.5 V10.5 M6 4.5 V10.5 M7.8 4.5 V10.5" stroke="#666" stroke-width="0.9"/></svg>
<div class="a" style="left:0;top:0;width:280px;height:90px;pointer-events:none;opacity:0.5;z-index:10">
<svg class="a" style="left:0;top:0" width="90" height="90" viewBox="0 0 90 90">
<path d="M27 18 H23 A8 8 0 0 0 15 26 V62.4 A8 8 0 0 0 23 70.4 H53 V67 H33 A6 6 0 0 1 27 61 Z" fill="#48c896"/>
<path d="M34 39.9 H65.2 V70.4 H53 V43.4 H34 Z" fill="#48c896"/>
<path d="M66.6 24 H79.8 V68.7 A8 8 0 0 1 71.8 76.7 H35 V72.7 H66.6 Z" fill="#1485cd"/>
</svg>
<div class="a" style="left:93px;top:14.5px;font-size:59px;line-height:70px;color:#148cd7;-webkit-text-stroke:0.3px #148cd7">源素网</div>
</div>
</body></html>
